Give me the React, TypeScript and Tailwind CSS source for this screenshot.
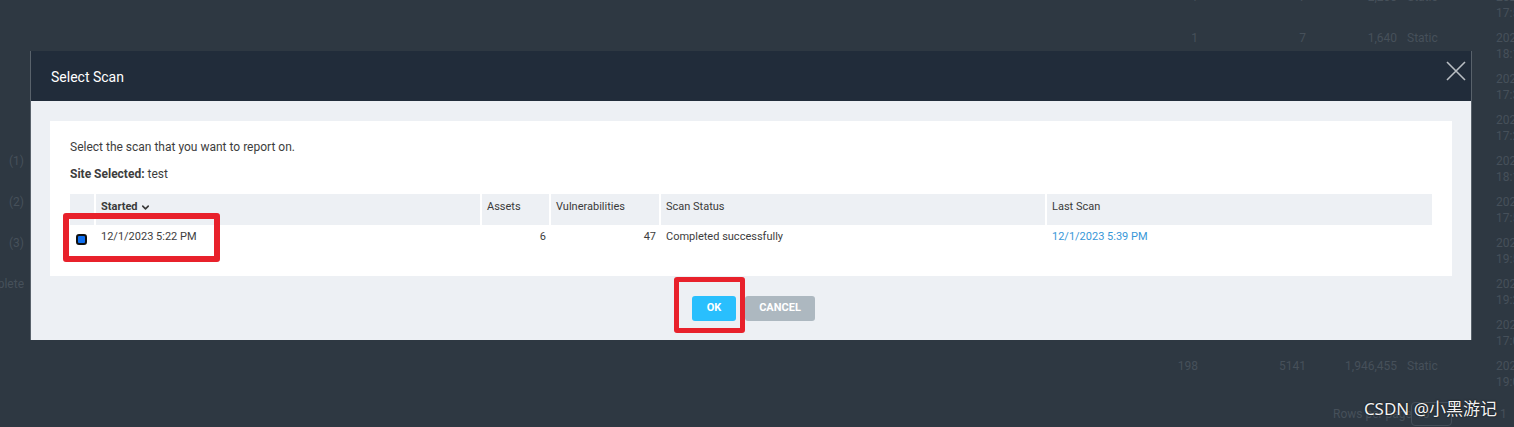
import { ChevronDown } from "lucide-react";

const bgRows = [
  { left: "", a: "1", b: "7", c: "2,200", d: "Static", t1: "2023-12-01", t2: "17:52" },
  { left: "", a: "1", b: "7", c: "1,640", d: "Static", t1: "2023-12-01", t2: "18:10" },
  { left: "", a: "", b: "", c: "", d: "", t1: "2023-12-01", t2: "17:31" },
  { left: "", a: "", b: "", c: "", d: "", t1: "2023-12-01", t2: "17:22" },
  { left: "(1)", a: "", b: "", c: "", d: "", t1: "2023-12-01", t2: "18:14" },
  { left: "(2)", a: "", b: "", c: "", d: "", t1: "2023-12-01", t2: "17:56" },
  { left: "(3)", a: "", b: "", c: "", d: "", t1: "2023-12-01", t2: "19:51" },
  { left: "plete", a: "", b: "", c: "", d: "", t1: "2023-12-01", t2: "19:20" },
  { left: "", a: "", b: "", c: "", d: "", t1: "2023-12-01", t2: "17:03" },
  { left: "", a: "198", b: "5141", c: "1,946,455", d: "Static", t1: "2023-12-01", t2: "19:04" },
];

const headers = ["Started", "Assets", "Vulnerabilities", "Scan Status", "Last Scan"];

export default function App() {
  return (
    <div
      className="relative h-[427px] w-full overflow-hidden bg-[#2e3842] text-[12px]"
      style={{ fontFamily: "Roboto, 'Liberation Sans', sans-serif" }}
    >
      {/* page behind the dialog */}
      <div className="-mt-[11px] flex flex-col text-[#46505a]">
        {bgRows.map((r, i) => (
          <div key={i} className="flex h-[41px] leading-[16px]">
            <div className="flex w-[24px] shrink-0 justify-end overflow-hidden whitespace-nowrap">{r.left}</div>
            <div className="w-[1126px] shrink-0" />
            <div className="w-[48px] shrink-0 text-right">{r.a}</div>
            <div className="w-[108px] shrink-0 text-right">{r.b}</div>
            <div className="w-[91px] shrink-0 text-right">{r.c}</div>
            <div className="w-[99px] shrink-0 pl-[10px]">{r.d}</div>
            <div className="shrink-0 whitespace-nowrap">
              <div>{r.t1}</div>
              <div>{r.t2}</div>
            </div>
          </div>
        ))}
        <div className="flex h-[30px] items-center leading-[16px]">
          <div className="w-[1333px] shrink-0" />
          <span className="w-[78px] shrink-0 whitespace-nowrap">Rows per page</span>
          <span className="h-[24px] w-[41px] shrink-0 rounded-sm border border-[#444e58] px-[4px] leading-[22px]">10</span>
          <span className="ml-[48px] shrink-0">1</span>
        </div>
      </div>

      {/* dialog */}
      <div className="absolute left-[30px] top-[51px] flex w-[1442px] flex-col border-x border-[#59626b]">
        <div className="relative flex h-[50px] items-center bg-[#212c3a] px-[20px] pt-[3px]">
          <span className="text-[14px] text-white">Select Scan</span>
          <svg className="absolute right-[5px] top-[10px]" width="20" height="20" viewBox="0 0 20 20">
            <path d="M1 1 L19 19 M19 1 L1 19" stroke="#b9bec3" strokeWidth="1.6" fill="none" />
          </svg>
        </div>
        <div className="bg-[#edf0f4] px-[19px] pb-[19px] pt-[20px]">
          <div className="bg-white px-[20px] pb-[20px] pt-[19px] text-[12px] leading-[14px] text-[#3d3d3d]">
            <p>Select the scan that you want to report on.</p>
            <p className="mt-[13px]">
              <span className="font-bold">Site Selected:</span> test
            </p>
            <div className="mt-[13px] grid grid-cols-[24px_384px_67px_108px_384px_385px] gap-x-[2px] text-[11px]">
              <div className="h-[31px] bg-[#edf0f4]" />
              {headers.map((h) => (
                <div key={h} className="flex h-[31px] items-start bg-[#edf0f4] px-[5px] pt-[6px] text-[#3a3a3a]">
                  {h === "Started" ? (
                    <span className="flex items-center gap-[2px] font-bold">
                      Started <ChevronDown size={11} strokeWidth={3.5} />
                    </span>
                  ) : (
                    h
                  )}
                </div>
              ))}
              <div className="h-[31px] pl-[6px] pt-[9px]">
                <div className="h-[11px] w-[11px] rounded-[3px] border-2 border-[#111] bg-[#0f6ff0]" />
              </div>
              <div className="px-[5px] pt-[5px]">12/1/2023 5:22 PM</div>
              <div className="pr-[3px] pt-[5px] text-right">6</div>
              <div className="pr-[3px] pt-[5px] text-right">47</div>
              <div className="px-[5px] pt-[5px]">Completed successfully</div>
              <div className="px-[5px] pt-[5px] text-[#3797d8]">12/1/2023 5:39 PM</div>
            </div>
          </div>
          <div className="mt-[20px] flex justify-center gap-[9px] pl-[5px] text-[11px] font-bold text-white">
            <button className="h-[25px] w-[44px] rounded-[3px] bg-[#29bffd]">OK</button>
            <button className="h-[25px] w-[70px] rounded-[3px] bg-[#adb8c0]">CANCEL</button>
          </div>
        </div>
      </div>

      {/* red annotation boxes */}
      <div className="absolute left-[63px] top-[213px] h-[49px] w-[157px] rounded-[3px] border-[6px] border-[#e8212b]" />
      <div className="absolute left-[674px] top-[277px] h-[56px] w-[71px] rounded-[3px] border-[5px] border-[#e8212b]" />

      {/* watermark */}
      <div
        className="absolute right-[17px] top-[396px] text-[17px] text-[#f2f2f2] [text-shadow:0_0_2px_#000]"
        style={{ fontFamily: "'Noto Sans', 'Noto Sans CJK SC', sans-serif" }}
      >
        CSDN @小黑游记
      </div>
    </div>
  );
}
